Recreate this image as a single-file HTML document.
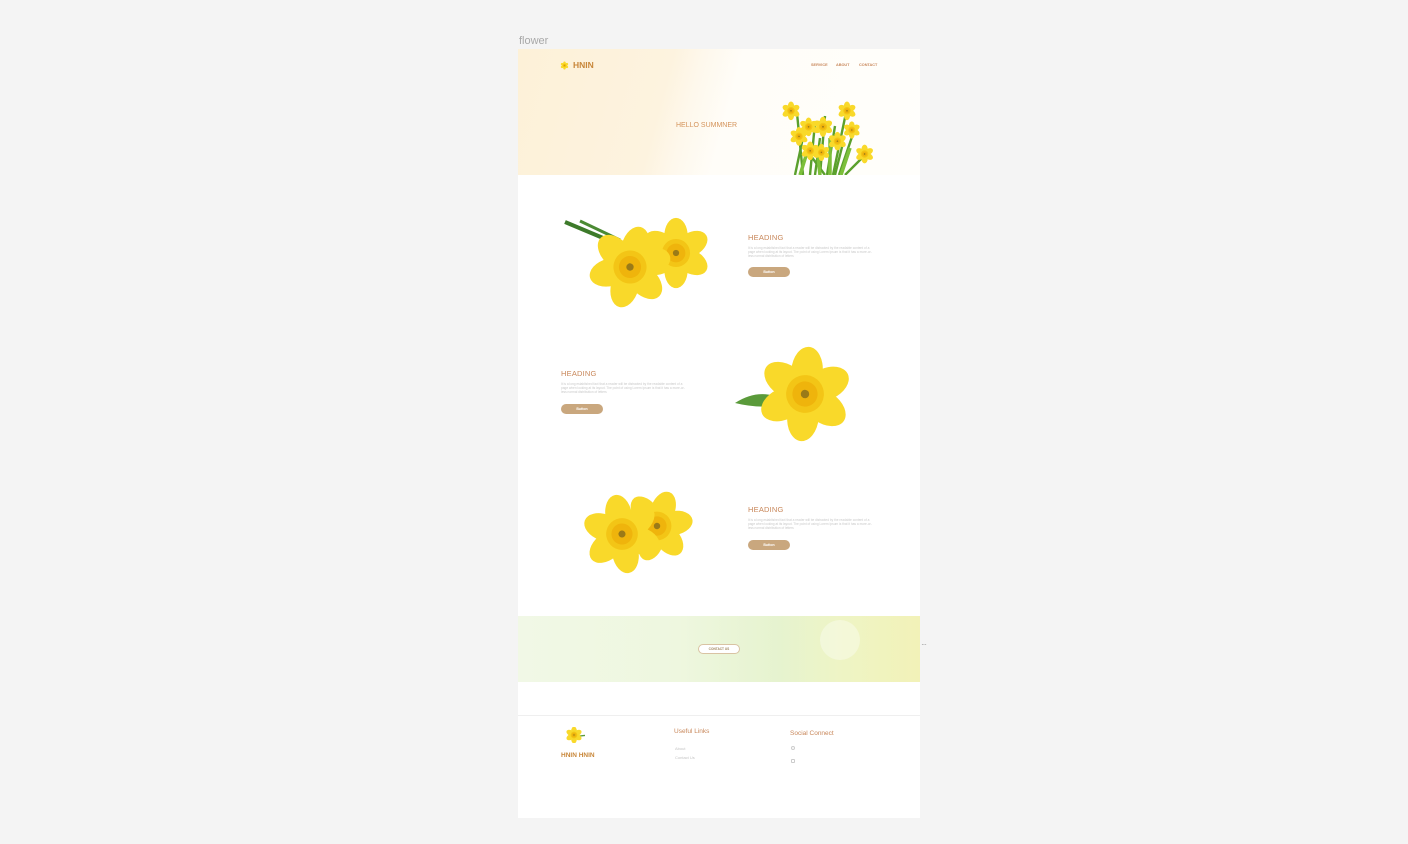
<!DOCTYPE html>
<html><head><meta charset="utf-8">
<style>
*{margin:0;padding:0;box-sizing:border-box}
body{width:1408px;height:844px;background:#f4f4f4;position:relative;overflow:hidden;font-family:"Liberation Sans",sans-serif}
.a{position:absolute}
.frame{left:518px;top:49px;width:402px;height:769px;background:#fff}
.hero{left:518px;top:49px;width:402px;height:126px;background:linear-gradient(105deg,#fdf1d8 0%,#fdf3df 36%,#fef8ec 43%,#fffdf8 52%,#fffefb 100%)}
.h{font-size:7.5px;color:#c8875a;letter-spacing:.2px}
.p{font-size:3.2px;line-height:4px;color:#c9c9c9;width:128px}
.btn{width:42px;height:10px;border-radius:5px;background:#c9a77e;color:#fff;font-size:3.5px;text-align:center;line-height:10px;font-weight:bold}
.nav{font-size:3.8px;color:#c8875a;font-weight:bold;top:63px}
</style></head><body>
<svg width="0" height="0" style="position:absolute">
<defs>
<g id="daf">
<g fill="#f9d92a">
<ellipse cx="0" cy="-22" rx="15" ry="23"/>
<ellipse cx="0" cy="-22" rx="15" ry="23" transform="rotate(60)"/>
<ellipse cx="0" cy="-22" rx="15" ry="23" transform="rotate(120)"/>
<ellipse cx="0" cy="-22" rx="15" ry="23" transform="rotate(180)"/>
<ellipse cx="0" cy="-22" rx="15" ry="23" transform="rotate(240)"/>
<ellipse cx="0" cy="-22" rx="15" ry="23" transform="rotate(300)"/>
</g>
<circle r="18" fill="#f3c516"/>
<circle r="12" fill="#efb40c"/>
<circle r="4" fill="#9a7a18"/>
</g>
</defs>
</svg>
<div class="a" style="left:519px;top:35px;font-size:11px;color:#a8a8a8">flower</div>
<div class="a frame"></div>
<div class="a hero"></div>
<svg class="a" style="left:560px;top:61px" width="9" height="9" viewBox="-50 -50 100 100"><use href="#daf"/></svg>
<div class="a" style="left:573px;top:60px;font-size:8.5px;font-weight:bold;color:#c8873a">HNIN</div>
<div class="a nav" style="left:811px">SERVICE</div>
<div class="a nav" style="left:836px">ABOUT</div>
<div class="a nav" style="left:859px">CONTACT</div>
<div class="a" style="left:676px;top:122px;font-size:7px;color:#d4935a">HELLO SUMMNER</div>
<svg class="a" style="left:775px;top:98px" width="110" height="77" viewBox="0 0 110 77">
<g stroke="#5aa02c" stroke-width="2.4" fill="none">
<path d="M20 77 L30 30"/><path d="M28 77 L22 15"/><path d="M35 77 L40 25"/><path d="M45 77 L50 18"/><path d="M52 77 L60 28"/><path d="M58 77 L72 10"/><path d="M64 77 L80 30"/><path d="M70 77 L92 55"/><path d="M40 77 L45 40"/><path d="M50 77 L30 50"/><path d="M60 77 L68 45"/>
</g>
<g stroke="#7cbf3a" stroke-width="3.5" fill="none"><path d="M25 77 L35 45"/><path d="M55 77 L55 40"/><path d="M66 77 L75 50"/><path d="M45 77 L42 50"/></g>
<g transform="scale(.16)">
<use href="#daf" transform="translate(100,80) scale(1.3)"/><use href="#daf" transform="translate(450,80) scale(1.3)"/><use href="#daf" transform="translate(300,180) scale(1.4)"/><use href="#daf" transform="translate(150,240) scale(1.3)"/><use href="#daf" transform="translate(220,330) scale(1.3)"/><use href="#daf" transform="translate(390,270) scale(1.3)"/><use href="#daf" transform="translate(480,200) scale(1.2)"/><use href="#daf" transform="translate(290,340) scale(1.2)"/><use href="#daf" transform="translate(560,350) scale(1.3)"/><use href="#daf" transform="translate(210,180) scale(1.3)"/>
</g>
</svg>
<svg class="a" style="left:560px;top:205px" width="160" height="110" viewBox="0 0 160 110">
<path d="M5 17 L55 38" stroke="#3d7a2a" stroke-width="4"/>
<path d="M20 16 L60 35" stroke="#4b8a33" stroke-width="3"/>
<g transform="translate(116,48) scale(.78)"><use href="#daf"/></g>
<g transform="translate(70,62) scale(.92) rotate(15)"><use href="#daf"/></g>
</svg>
<div class="a h" style="left:748px;top:233px">HEADING</div>
<div class="a p" style="left:748px;top:246px">It is a long established fact that a reader will be distracted by the readable content of a page when looking at its layout. The point of using Lorem Ipsum is that it has a more-or-less normal distribution of letters</div>
<div class="a btn" style="left:748px;top:267px">Button</div>
<div class="a h" style="left:561px;top:369px">HEADING</div>
<div class="a p" style="left:561px;top:382px">It is a long established fact that a reader will be distracted by the readable content of a page when looking at its layout. The point of using Lorem Ipsum is that it has a more-or-less normal distribution of letters</div>
<div class="a btn" style="left:561px;top:404px">Button</div>
<svg class="a" style="left:730px;top:338px" width="130" height="105" viewBox="0 0 130 105">
<path d="M5 65 Q25 52 45 58 L45 68 Q25 70 5 65Z" fill="#5a9a3a"/>
<g transform="translate(75,56) scale(1.05) rotate(5)"><use href="#daf"/></g>
</svg>
<svg class="a" style="left:572px;top:484px" width="130" height="96" viewBox="0 0 130 96">
<g transform="translate(85,42) scale(.8) rotate(20)"><use href="#daf"/></g>
<g transform="translate(50,50) scale(.88) rotate(-10)"><use href="#daf"/></g>
</svg>
<div class="a h" style="left:748px;top:505px">HEADING</div>
<div class="a p" style="left:748px;top:518px">It is a long established fact that a reader will be distracted by the readable content of a page when looking at its layout. The point of using Lorem Ipsum is that it has a more-or-less normal distribution of letters</div>
<div class="a btn" style="left:748px;top:540px">Button</div>
<div class="a" style="left:518px;top:616px;width:402px;height:66px;background:linear-gradient(90deg,#f1f8e6 0%,#eef7df 40%,#e6f3cf 65%,#eef4c5 80%,#f2f2b8 100%)"></div>
<div class="a" style="left:820px;top:620px;width:40px;height:40px;border-radius:50%;background:rgba(255,255,255,.35)"></div>
<div class="a" style="left:698px;top:644px;width:42px;height:10px;border-radius:5px;background:#fff;border:1px solid #d9c3a3;font-size:3.2px;color:#a0865f;text-align:center;line-height:8px;font-weight:bold">CONTACT US</div>
<div class="a" style="left:921px;top:640px;font-size:8px;color:#999;letter-spacing:-1px">···</div>
<div class="a" style="left:518px;top:715px;width:402px;height:1px;background:#efefef"></div>
<svg class="a" style="left:563px;top:727px" width="22" height="16" viewBox="-50 -36 100 72"><path d="M20 5 L50 2" stroke="#5a9a3a" stroke-width="6"/><use href="#daf" transform="scale(.85)"/></svg>
<div class="a" style="left:561px;top:752px;font-size:6.5px;font-weight:bold;color:#c8873a">HNIN HNIN</div>
<div class="a" style="left:674px;top:728px;font-size:6.5px;color:#c8875a">Useful Links</div>
<div class="a" style="left:675px;top:746px;font-size:4px;color:#c4c4c4">About</div>
<div class="a" style="left:675px;top:755px;font-size:4px;color:#c4c4c4">Contact Us</div>
<div class="a" style="left:790px;top:730px;font-size:6.5px;color:#c8875a">Social Connect</div>
<div class="a" style="left:791px;top:746px;width:4px;height:4px;border:1px solid #ccc;border-radius:50%"></div>
<div class="a" style="left:791px;top:759px;width:4px;height:4px;border:1px solid #ccc;border-radius:1px"></div>
</body></html>
